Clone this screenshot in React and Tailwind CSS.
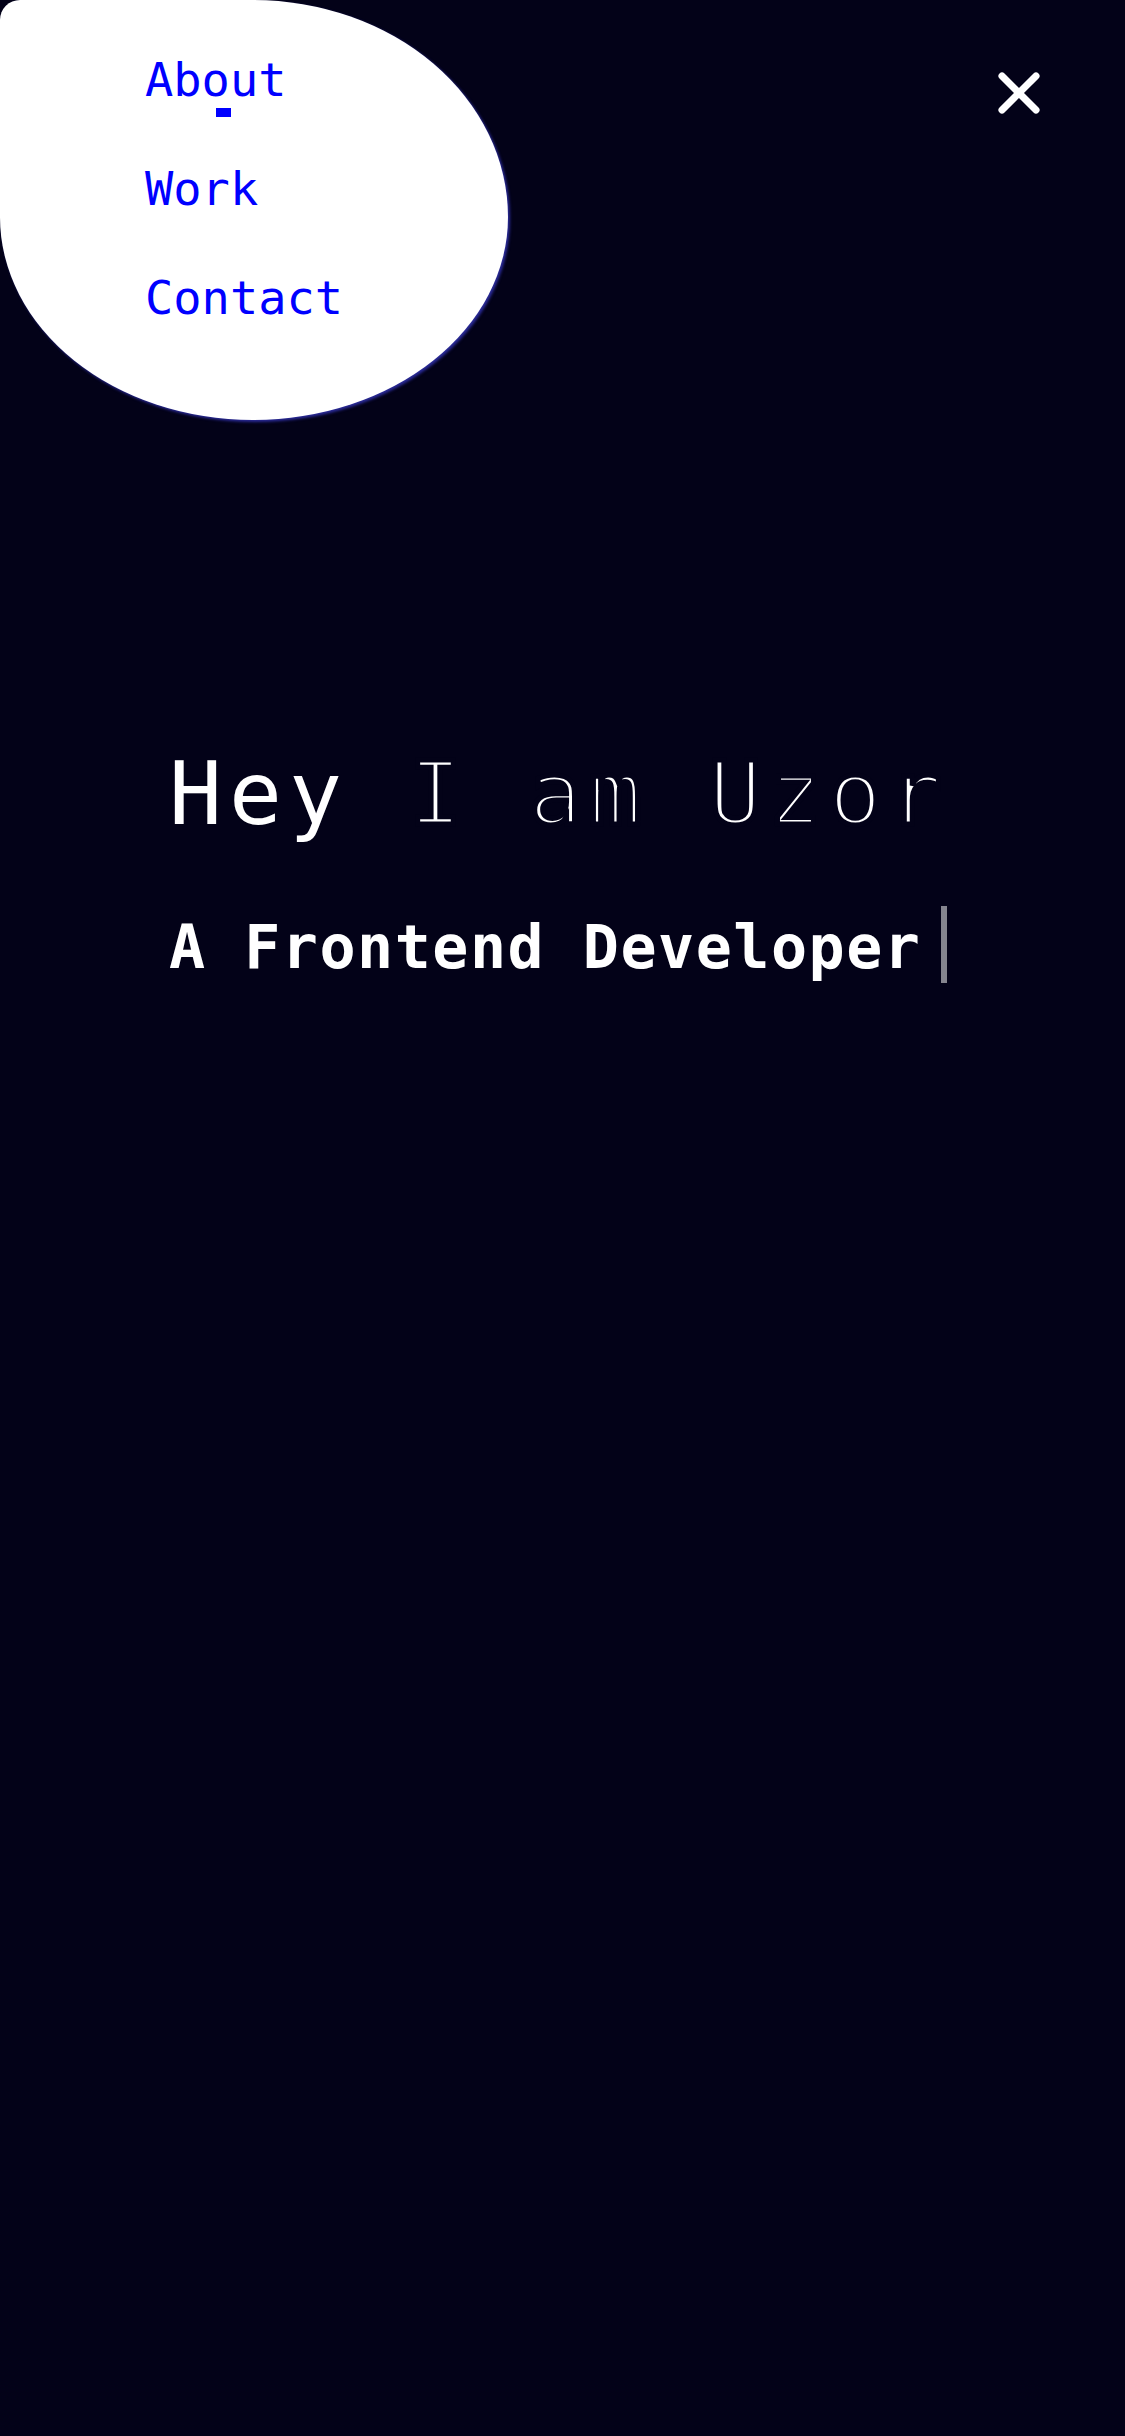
export default function App() {
  return (
    <div className="relative min-h-screen w-full bg-[#030218] font-['DejaVu_Sans_Mono',monospace] overflow-hidden">
      <nav className="absolute left-0 top-0 w-[508px] h-[420px] bg-white rounded-[20px_255px_255px_253px/20px_217px_203px_203px] shadow-[2px_2px_3px_#2b2b9a] z-10">
        <ul className="pt-[25px] pl-[145px] text-[47px] leading-[109px] text-[#0000ff]">
          <li className="relative">
            About
            <span className="absolute left-[71px] top-[83px] w-[15px] h-[9px] bg-[#0000ff]" />
          </li>
          <li>Work</li>
          <li>Contact</li>
        </ul>
      </nav>

      <header className="flex justify-end pt-[59px] pr-[72px] h-[127px]">
        <button className="w-[68px] h-[68px] text-white">
          <svg viewBox="0 0 24 24" width="68" height="68" fill="none" stroke="currentColor" strokeWidth="2.5" strokeLinecap="round" strokeLinejoin="round">
            <path d="M18 6 6 18" />
            <path d="m6 6 12 12" />
          </svg>
        </button>
      </header>

      <main className="pl-[169px] pt-[623px]">
        <h1 className="text-[88px] leading-[88px] tracking-[7px] text-white whitespace-pre font-normal">
          <span>Hey </span>
          <span className="[-webkit-text-stroke:5px_#030218]">I am Uzor</span>
        </h1>
        <p className="mt-[73px] flex items-center text-[60px] leading-[60px] font-bold tracking-[1.5px] text-white">
          <span>A Frontend Developer</span>
          <span className="ml-[20px] w-[6px] h-[77px] bg-[#85858f] -mt-[5px]" />
        </p>
      </main>
    </div>
  );
}
